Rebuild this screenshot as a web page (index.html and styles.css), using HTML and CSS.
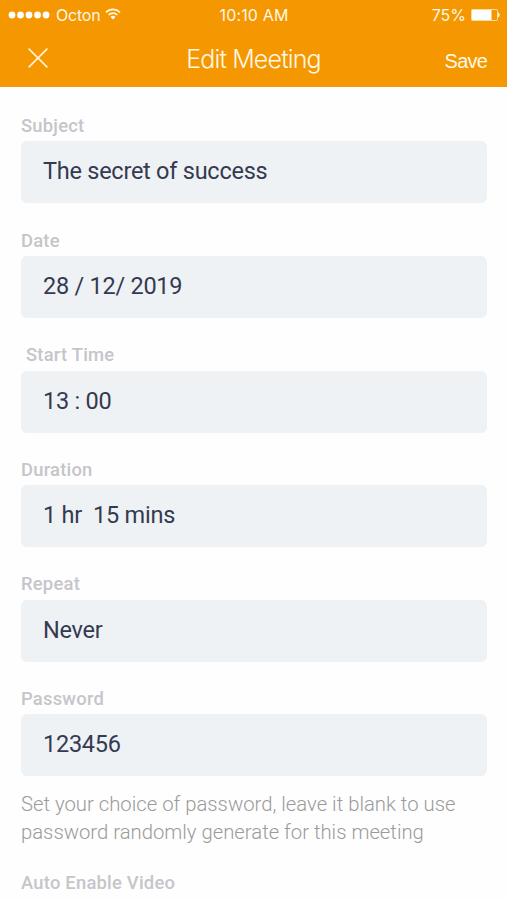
FILE: index.html
```html
<!DOCTYPE html>
<html lang="en">
<head>
<meta charset="utf-8">
<title>Edit Meeting</title>
<link rel="stylesheet" href="styles.css">
</head>
<body>
<header class="header">
  <div class="status">
    <div class="carrier">
      <svg class="signal" width="42" height="8" viewBox="0 0 42 8" fill="#fff"><circle cx="4" cy="4" r="3.4"/><circle cx="12.5" cy="4" r="3.4"/><circle cx="21" cy="4" r="3.4"/><circle cx="29.5" cy="4" r="3.4"/><circle cx="38" cy="4" r="3.4"/></svg>
      <span class="network">Octon</span>
      <svg class="wifi" width="16" height="12" viewBox="0 0 16 12"><g fill="none" stroke="#fff8df" stroke-width="1.7"><path d="M1 4.3a10 10 0 0 1 14 0"/><path d="M3.6 7a6.2 6.2 0 0 1 8.8 0"/></g><path d="M8 11.6 5.5 9a3.5 3.5 0 0 1 5 0z" fill="#fff"/></svg>
    </div>
    <span class="clock">10:10 AM</span>
    <div class="power">
      <span class="percent">75%</span>
      <svg class="battery" width="29" height="12" viewBox="0 0 29 12"><rect x=".5" y=".5" width="26" height="11" rx="1" fill="none" stroke="#fff" stroke-opacity=".65"/><rect x="1" y="1" width="19.5" height="10" fill="#fff"/><path d="M27 3.6c2.2.6 2.2 4.200 0 4.800z" fill="#fff" fill-opacity=".9"/></svg>
    </div>
  </div>
  <nav class="nav">
    <button class="close" aria-label="Close"><svg width="20" height="20" viewBox="0 0 20 20" stroke="#fff5dc" stroke-width="1.5"><path d="M.6.6l18.800 18.800M19.400.6.6 19.400"/></svg></button>
    <h1 class="title">Edit Meeting</h1>
    <button class="save">Save</button>
  </nav>
</header>
<main class="form">
  <section class="field"><div class="label">Subject</div><div class="value">The secret of success</div></section>
  <section class="field"><div class="label">Date</div><div class="value">28 / 12/ 2019</div></section>
  <section class="field"><div class="label indented">Start Time</div><div class="value">13 : 00</div></section>
  <section class="field"><div class="label">Duration</div><div class="value">1 hr&nbsp; 15 mins</div></section>
  <section class="field"><div class="label">Repeat</div><div class="value">Never</div></section>
  <section class="field"><div class="label">Password</div><div class="value">123456</div></section>
  <p class="hint">Set your choice of password, leave it blank to use<br>password randomly generate for this meeting</p>
  <div class="label">Auto Enable Video</div>
</main>
</body>
</html>
```
FILE: styles.css
```css
* { box-sizing: border-box; }
body {
  margin: 0;
  height: 900px;
  overflow: hidden;
  background: #fefefe;
  font-family: Roboto, sans-serif;
}
.header {
  height: 87px;
  background: #f59700;
  color: #fff8e6;
}
.status {
  display: grid;
  grid-template-columns: 1fr auto 1fr;
  align-items: center;
  height: 30px;
  padding: 0 7px 0 8px;
  font: 400 16px/30px Inter, sans-serif;
}
.carrier, .power { display: flex; align-items: center; }
.power { justify-content: flex-end; }
.network { margin-left: 6px; letter-spacing: -.2px; }
.wifi { margin: -2px 0 0 4px; }
.clock { letter-spacing: .15px; }
.battery { margin-left: 5px; }
.nav {
  display: grid;
  grid-template-columns: 1fr auto 1fr;
  align-items: center;
  height: 57px;
  padding: 0 20px 0 28px;
}
.close, .save {
  border: 0;
  padding: 0;
  background: none;
  color: inherit;
}
.close { justify-self: start; line-height: 0; padding-bottom: 1px; }
.save {
  justify-self: end;
  font: 400 20px/24px "Liberation Sans", sans-serif;
  letter-spacing: -.8px;
  padding-top: 4px;
}
.title {
  margin: 0 0 0 -8px;
  font: 300 25px/30px Inter, sans-serif;
  letter-spacing: -.85px;
}
.form { padding: 26px 20px 0 21px; }
.field { height: 114.6px; }
.label {
  height: 28.4px;
  font-size: 18.4px;
  font-weight: 500;
  line-height: 26px;
  letter-spacing: .22px;
  color: #c5c5ca;
  white-space: nowrap;
}
.indented { padding-left: 5px; }
.value {
  height: 62px;
  padding: 0 22px;
  border-radius: 6px;
  background: #eef2f5;
  color: #343a50;
  font-size: 23.5px;
  line-height: 60px;
  letter-spacing: -.25px;
}
.hint {
  margin: -11px 0 24.5px;
  font-size: 20.3px;
  font-weight: 300;
  line-height: 28px;
  color: #9b9b9b;
  white-space: nowrap;
}
```
